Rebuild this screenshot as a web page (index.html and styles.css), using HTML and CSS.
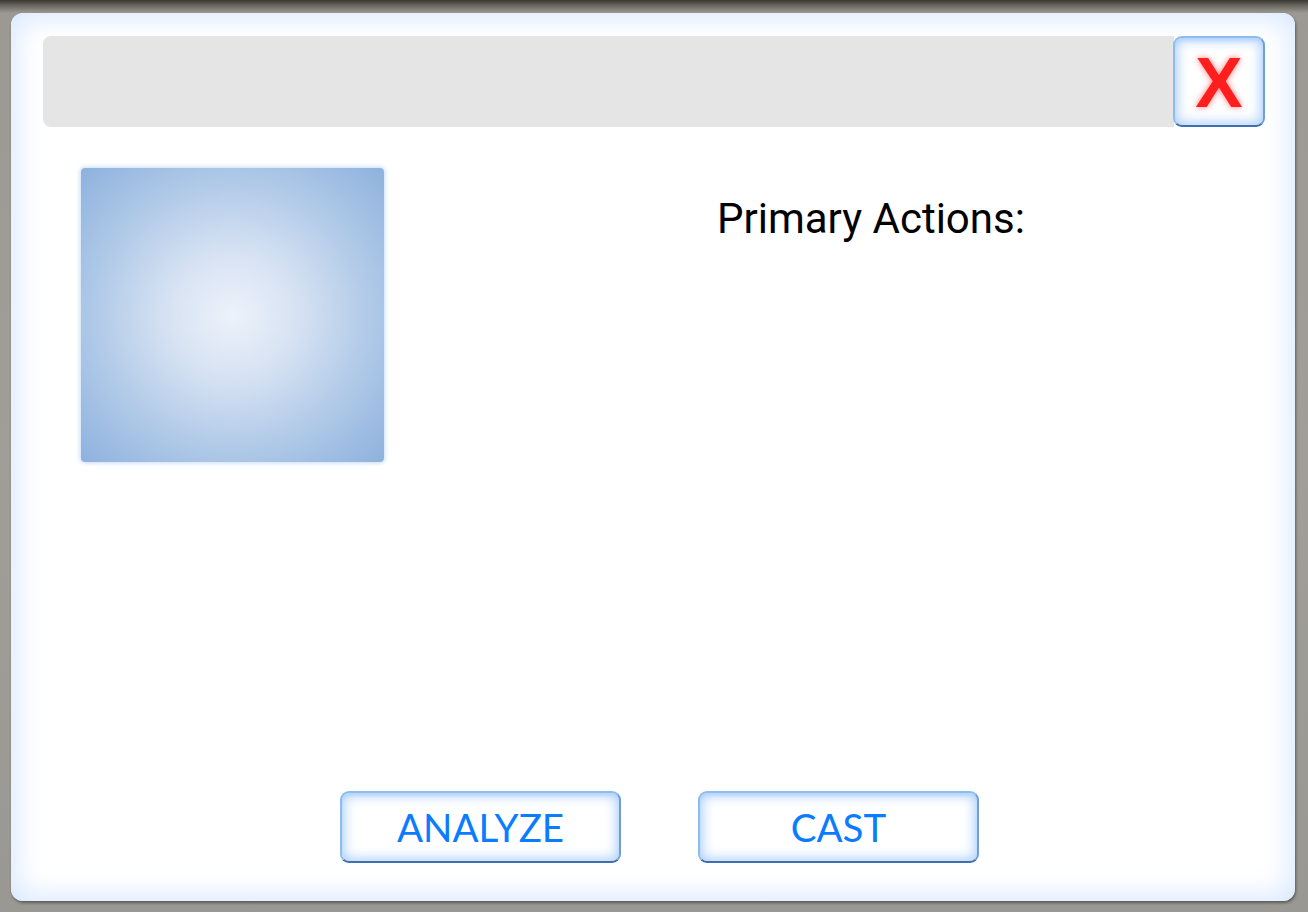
FILE: index.html
```html
<!DOCTYPE html>
<html>
<head>
<meta charset="utf-8">
<link rel="stylesheet" href="styles.css">
</head>
<body>
<div class="backdrop">
  <div class="dialog">
    <div class="header">
      <div class="title-bar"></div>
      <button class="close-btn">X</button>
    </div>
    <div class="content">
      <div class="portrait"></div>
      <div class="actions">
        <div class="actions-title">Primary Actions:</div>
      </div>
    </div>
    <div class="spacer"></div>
    <div class="button-row">
      <button class="action-btn">ANALYZE</button>
      <button class="action-btn">CAST</button>
    </div>
  </div>
</div>
</body>
</html>
```
FILE: styles.css
```css
html, body {
  margin: 0;
  padding: 0;
  width: 1308px;
  height: 912px;
  overflow: hidden;
}
body {
  background: linear-gradient(180deg, #3a3833 0px, #6d6a63 6px, #9c9992 13px, #a19e98 50%, #9a9892 100%);
  font-family: "Lato", "Noto Sans", sans-serif;
}
.backdrop {
  box-sizing: border-box;
  width: 1308px;
  height: 912px;
  padding: 13px 13px 11px 11px;
}
.dialog {
  box-sizing: border-box;
  width: 1284px;
  height: 888px;
  background: #ffffff;
  border-radius: 12px;
  box-shadow: inset 0 0 30px 3px #d4e5ff, 1px 2px 3px rgba(0,0,0,0.4);
  display: flex;
  flex-direction: column;
  padding: 23px 30px 38px 32px;
}
.header {
  display: flex;
  height: 91px;
}
.title-bar {
  flex: 1;
  background: #e5e5e5;
  border-radius: 8px 0 0 8px;
}
.close-btn {
  box-sizing: border-box;
  width: 92px;
  height: 91px;
  margin-left: -1px;
  padding: 2px 0 0 0;
  border-radius: 9px;
  border: 2px solid #8dbcef;
  border-bottom-color: #3f6fae;
  border-right-color: #6f9fd8;
  background: #ffffff;
  box-shadow: inset 0 0 12px 3px #b3d3fa, inset 0 3px 3px #c6e0ff;
  font-family: "Liberation Sans", Arial, sans-serif;
  font-weight: bold;
  font-size: 71px;
  line-height: 1;
  color: #ff1e1e;
  text-shadow: 0 0 6px rgba(255, 60, 60, 0.7);
  display: flex;
  align-items: center;
  justify-content: center;
}
.content {
  display: flex;
  margin-top: 41px;
  padding-left: 38px;
}
.portrait {
  width: 303px;
  height: 294px;
  border-radius: 4px;
  background: radial-gradient(ellipse 72% 72% at 50% 50%, #edf2fa 0%, #d6e2f3 30%, #aec8e7 65%, #8cb0dd 100%);
  box-shadow: 0 0 4px 1px #c4dbf6;
}
.actions {
  margin-left: 333px;
  padding-top: 27px;
}
.actions-title {
  font-family: "Roboto", "Noto Sans", sans-serif;
  font-size: 42px;
  color: #000000;
  line-height: 48px;
  white-space: nowrap;
}
.spacer {
  flex: 1;
}
.button-row {
  display: flex;
  justify-content: center;
  gap: 77px;
  padding-left: 11px;
}
.action-btn {
  box-sizing: border-box;
  width: 281px;
  height: 72px;
  border-radius: 9px;
  border: 2px solid #8dbcef;
  border-bottom-color: #3f6fae;
  border-right-color: #6f9fd8;
  background: #ffffff;
  box-shadow: inset 0 0 12px 3px #b3d3fa, inset 0 3px 3px #c6e0ff;
  font-family: "Lato", "Noto Sans", sans-serif;
  font-size: 38.5px;
  color: #0a7cff;
  padding: 0;
  line-height: 1;
}
```
